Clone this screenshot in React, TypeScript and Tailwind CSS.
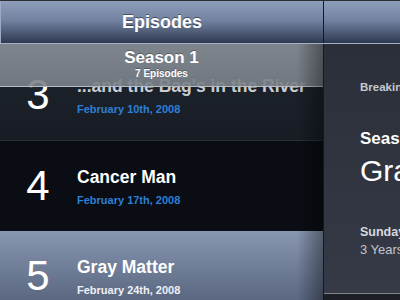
type Episode = {
	number: number
	title: string
	date: string
	tone: "dim" | "dark" | "selected"
}

const episodes: Episode[] = [
	{ number: 3, title: "...and the Bag's in the River", date: "February 10th, 2008", tone: "dim" },
	{ number: 4, title: "Cancer Man", date: "February 17th, 2008", tone: "dark" },
	{ number: 5, title: "Gray Matter", date: "February 24th, 2008", tone: "selected" },
]

export default function App() {
	return (
		<div className="flex h-[300px] w-[400px] flex-col overflow-hidden border-t border-[#2a2d33] bg-[#1c1f25] font-['Liberation_Sans',Arial,sans-serif]">
			<header className="flex h-[43px] shrink-0 border-b border-[#a9b2c4] bg-[linear-gradient(#8e9dba,#7383a1_45%,#2d3950)]">
				<div className="flex w-[323px] items-center justify-center border-l border-[#9eabc2] text-[18px] font-bold text-white [text-shadow:0_-1px_0_rgba(0,0,0,0.45)]">
					Episodes
				</div>
				<div className="flex-1 border-l border-[#15181f]" />
			</header>
			<div className="flex flex-1">
				<div className="relative w-[323px] overflow-hidden">
					{episodes.map((episode) => (
						<EpisodeRow key={episode.number} episode={episode} />
					))}
					<div className="absolute inset-x-0 top-0 flex h-[43px] flex-col items-center border-b border-[#b9bdc3] bg-[linear-gradient(rgba(136,143,151,0.9),rgba(122,129,137,0.9))] pt-[4px] font-bold text-white [text-shadow:0_-1px_0_rgba(0,0,0,0.3)]">
						<div className="text-[17px] leading-[20px]">Season 1</div>
						<div className="text-[10px] leading-[12px]">7 Episodes</div>
					</div>
					<div className="absolute inset-y-0 right-0 w-[26px] bg-[linear-gradient(to_right,transparent,rgba(0,0,0,0.38))]" />
				</div>
				<aside className="flex-1 overflow-hidden border-l border-[#15181f]">
					<div className="flex h-[250px] flex-col whitespace-nowrap border-b border-[#7d828b] bg-[linear-gradient(#2b2f39,#363a46)] pl-[36px]">
						<div className="mt-[36px] text-[11.5px] leading-[14px] font-bold text-[#c5c9d1]">Breaking Bad</div>
						<div className="mt-[35px] text-[17px] leading-[20px] font-bold text-white">Season 1</div>
						<div className="mt-[5px] text-[30px] leading-[34px] text-white">Gray Matter</div>
						<div className="mt-[37px] text-[12.5px] leading-[15px] font-bold text-[#d5d9e0]">Sunday, February 24th, 2008</div>
						<div className="mt-[2px] text-[13px] leading-[16px] text-[#c2c6ce]">3 Years Ago</div>
					</div>
				</aside>
			</div>
		</div>
	)
}

function EpisodeRow({ episode }: { episode: Episode }) {
	const rowClass =
		episode.tone === "dim" ? "h-[97px] pt-[6px] border-b border-[#2a2f38] bg-[linear-gradient(#1e242d,#181d25)]"
		: episode.tone === "dark" ? "h-[90px] bg-[#0a0d13]"
		: "h-[90px] bg-[linear-gradient(#8896b1,#4d5972)]"
	const titleColor = episode.tone === "dim" ? "text-[#c9cdd3]" : "text-white"
	const dateColor = episode.tone === "selected" ? "text-[#eef0f4]" : "text-[#2d7fd5]"
	return (
		<div className={rowClass}>
			<div className="flex pl-[12px]">
				<div className="mt-[24px] w-[52px] text-center text-[42px] leading-[42px] text-white">{episode.number}</div>
				<div className="ml-[13px] mt-[26px] whitespace-nowrap">
					<div className={`text-[17.5px] leading-[20px] font-bold ${titleColor}`}>{episode.title}</div>
					<div className={`mt-[6px] text-[11px] leading-[14px] font-bold ${dateColor}`}>{episode.date}</div>
				</div>
			</div>
		</div>
	)
}
